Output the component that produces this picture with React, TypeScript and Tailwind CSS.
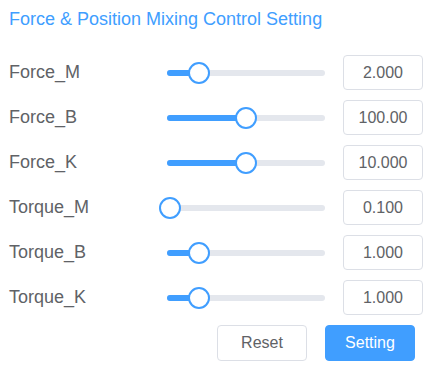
import React from 'react';

type Param = { label: string; value: string; pct: number };

const params: Param[] = [
  { label: 'Force_M', value: '2.000', pct: 20 },
  { label: 'Force_B', value: '100.00', pct: 50 },
  { label: 'Force_K', value: '10.000', pct: 50 },
  { label: 'Torque_M', value: '0.100', pct: 2 },
  { label: 'Torque_B', value: '1.000', pct: 20 },
  { label: 'Torque_K', value: '1.000', pct: 20 },
];

function Slider({ pct }: { pct: number }) {
  return (
    <div className="relative h-[6px] w-[158px] rounded-full bg-[#e4e7ed]">
      <div className="h-full rounded-full bg-[#409eff]" style={{ width: `${pct}%` }} />
      {/* thumb */}
      <div
        className="absolute top-1/2 h-[22px] w-[22px] -translate-x-1/2 -translate-y-1/2 rounded-full border-2 border-[#409eff] bg-white"
        style={{ left: `${pct}%` }}
      />
    </div>
  );
}

export default function App() {
  return (
    <div className="h-[391px] w-[432px] bg-white pl-[9px] font-['Liberation_Sans',Arial,sans-serif]">
      <h2 className="pt-[9px] text-[18px] leading-[20px] text-[#409eff]">
        Force &amp; Position Mixing Control Setting
      </h2>

      <div className="mt-[26px] flex flex-col gap-[10px]">
        {params.map((p) => (
          <div key={p.label} className="flex h-[35px] items-center">
            <span className="w-[158px] text-[18px] text-[#606266]">{p.label}</span>
            <Slider pct={p.pct} />
            <input
              readOnly
              value={p.value}
              className="ml-[18px] h-[35px] w-[80px] rounded-[4px] border border-[#dcdfe6] text-center text-[16px] text-[#606266] outline-none"
            />
          </div>
        ))}
      </div>

      <div className="mt-[10px] flex gap-[18px] pl-[208px]">
        <button className="h-[36px] w-[90px] rounded-[4px] border border-[#dcdfe6] bg-white text-[16px] text-[#606266]">
          Reset
        </button>
        <button className="h-[36px] w-[90px] rounded-[4px] border border-[#409eff] bg-[#409eff] text-[16px] text-white">
          Setting
        </button>
      </div>
    </div>
  );
}
